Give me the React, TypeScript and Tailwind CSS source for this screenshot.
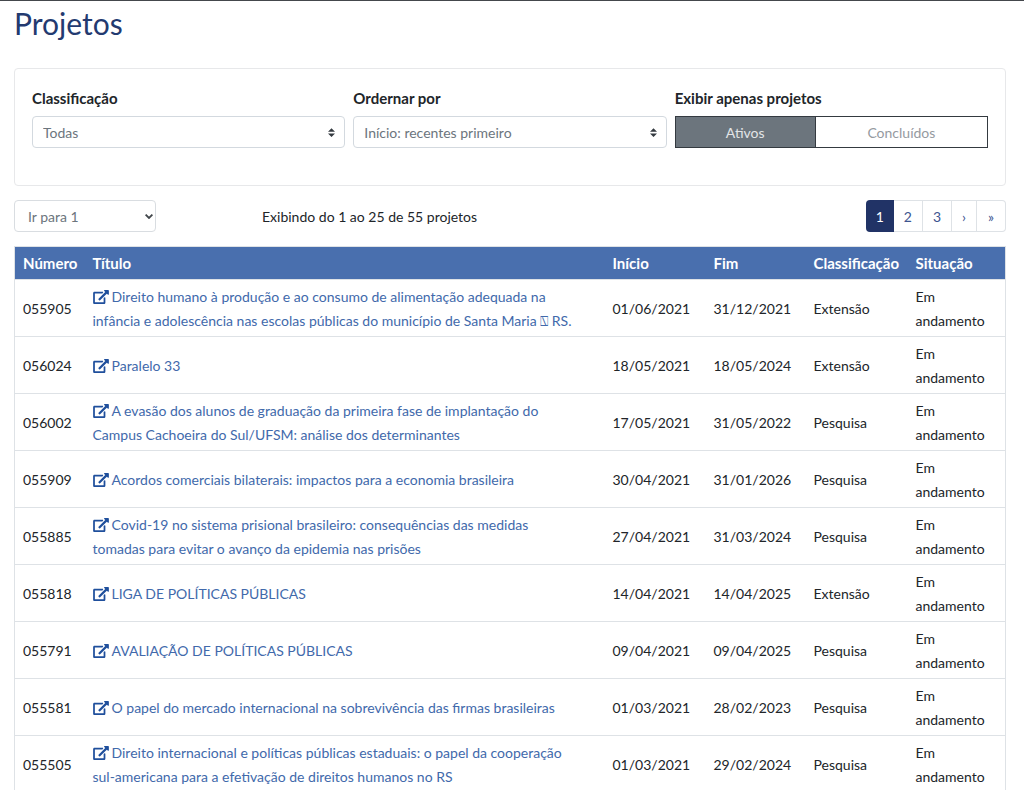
import type { ReactNode } from 'react';

type Project = {
  id: string;
  title: string;
  start: string;
  end: string;
  kind: string;
};

const projects: Project[] = [
  { id: '055905', title: 'Direito humano à produção e ao consumo de alimentação adequada na infância e adolescência nas escolas públicas do município de Santa Maria ⍂ RS.', start: '01/06/2021', end: '31/12/2021', kind: 'Extensão' },
  { id: '056024', title: 'Paralelo 33', start: '18/05/2021', end: '18/05/2024', kind: 'Extensão' },
  { id: '056002', title: 'A evasão dos alunos de graduação da primeira fase de implantação do Campus Cachoeira do Sul/UFSM: análise dos determinantes', start: '17/05/2021', end: '31/05/2022', kind: 'Pesquisa' },
  { id: '055909', title: 'Acordos comerciais bilaterais: impactos para a economia brasileira', start: '30/04/2021', end: '31/01/2026', kind: 'Pesquisa' },
  { id: '055885', title: 'Covid-19 no sistema prisional brasileiro: consequências das medidas tomadas para evitar o avanço da epidemia nas prisões', start: '27/04/2021', end: '31/03/2024', kind: 'Pesquisa' },
  { id: '055818', title: 'LIGA DE POLÍTICAS PÚBLICAS', start: '14/04/2021', end: '14/04/2025', kind: 'Extensão' },
  { id: '055791', title: 'AVALIAÇÃO DE POLÍTICAS PÚBLICAS', start: '09/04/2021', end: '09/04/2025', kind: 'Pesquisa' },
  { id: '055581', title: 'O papel do mercado internacional na sobrevivência das firmas brasileiras', start: '01/03/2021', end: '28/02/2023', kind: 'Pesquisa' },
  { id: '055505', title: 'Direito internacional e políticas públicas estaduais: o papel da cooperação sul-americana para a efetivação de direitos humanos no RS', start: '01/03/2021', end: '29/02/2024', kind: 'Pesquisa' },
];

function ExternalLink() {
  return (
    <svg viewBox="0 0 576 512" className="mr-[3px] inline-block h-3.5 w-4 align-[-2px] text-[#1f4f9c]" fill="currentColor" aria-hidden="true">
      <path d="M576 24v127.984c0 21.461-25.96 31.98-40.971 16.971l-35.707-35.709-243.523 243.523c-9.373 9.373-24.568 9.373-33.941 0l-22.627-22.627c-9.373-9.373-9.373-24.569 0-33.941L442.756 76.676l-35.703-35.705C391.982 25.9 402.656 0 424.024 0H552c13.255 0 24 10.745 24 24zM407.029 270.794l-16 16A23.999 23.999 0 0 0 384 303.765V448H64V128h264a24.003 24.003 0 0 0 16.97-7.029l16-16C376.089 89.851 365.381 64 344 64H48C21.49 64 0 85.49 0 112v352c0 26.51 21.49 48 48 48h352c26.51 0 48-21.49 48-48V287.764c0-21.382-25.852-32.09-40.971-16.97z" />
    </svg>
  );
}

function FilterSelect({ id, label, options }: { id: string; label: string; options: string[] }) {
  return (
    <div className="min-w-0">
      <label htmlFor={id} className="block text-[15px] font-bold">{label}</label>
      <div className="relative mt-1.5">
        <select id={id} className="block h-8 w-full appearance-none rounded border border-[#d3d9df] bg-white pt-px pr-8 pl-2.5 text-[#6c757d]">
          {options.map((o) => <option key={o}>{o}</option>)}
        </select>
        <svg viewBox="0 0 4 5" className="pointer-events-none absolute top-3 right-2.5 h-[9px] w-[7px]" fill="#343a40" aria-hidden="true">
          <path d="M2 0L0 2h4zm0 5L0 3h4z" />
        </svg>
      </div>
    </div>
  );
}

function PageLink({ label, children }: { label?: string; children: ReactNode }) {
  return (
    <li className="group">
      <a href="#" aria-label={label} className="flex h-8 items-center border-y border-r border-[#dee2e6] px-2.5 pt-px text-[#3d5590] group-last:rounded-r group-last:px-[11px]">
        {children}
      </a>
    </li>
  );
}

export default function App() {
  return (
    <main className="border-t border-[#44474c] bg-white pr-[18px] pl-3.5 font-['Lato','DejaVu_Sans',sans-serif] text-sm leading-6 text-[#212529]">
      <h1 className="pt-1 text-[30px] leading-9 text-[#233a70]">Projetos</h1>

      <form className="mt-[27px] rounded border border-[#e7e8ea] px-[17px] pt-[17px] pb-[37px]">
        <div className="grid grid-cols-3 gap-2">
          <FilterSelect id="classificacao" label="Classificação" options={['Todas', 'Extensão', 'Pesquisa']} />
          <FilterSelect id="ordem" label="Ordernar por" options={['Início: recentes primeiro', 'Início: antigos primeiro']} />
          <div role="group" aria-labelledby="exibir">
            <div id="exibir" className="text-[15px] font-bold">Exibir apenas projetos</div>
            <div className="mt-1.5 flex h-8 border border-[#343a40]">
              <button type="button" aria-pressed="true" className="w-[45%] border-r border-[#343a40] bg-[#6c757d] pt-px text-[#e3e5e7]">Ativos</button>
              <button type="button" aria-pressed="false" className="flex-1 bg-white pt-px text-[#959a9f]">Concluídos</button>
            </div>
          </div>
        </div>
      </form>

      <div className="mt-3.5 grid grid-cols-4 items-center">
        <div className="relative w-[142px]">
          <select aria-label="Ir para a página" className="block h-8 w-full appearance-none rounded border border-[#d9dde1] bg-white pt-px pr-6 pl-[13px] text-[#6c757d]">
            <option>Ir para 1</option>
            <option>Ir para 2</option>
            <option>Ir para 3</option>
          </select>
          <svg viewBox="0 0 8 5" className="pointer-events-none absolute top-3.5 right-[3px] h-[5px] w-2" fill="none" stroke="#41464b" strokeWidth="1.8" aria-hidden="true">
            <path d="M.6 .6L4 4L7.4 .6" />
          </svg>
        </div>
        <p className="col-span-2 pt-0.5">Exibindo do 1 ao 25 de 55 projetos</p>
        <nav aria-label="Paginação" className="justify-self-end">
          <ul className="flex">
            <li>
              <a href="#" aria-current="page" className="flex h-8 items-center rounded-l bg-[#213366] px-2.5 pt-px text-white">1</a>
            </li>
            <PageLink>2</PageLink>
            <PageLink>3</PageLink>
            <PageLink label="Próxima">›</PageLink>
            <PageLink label="Última">»</PageLink>
          </ul>
        </nav>
      </div>

      <table className="mt-3.5 w-full table-fixed border-collapse border border-[#dee2e6] text-left">
        <colgroup>
          <col className="w-[70px]" />
          <col />
          <col className="w-[101px]" />
          <col className="w-[100px]" />
          <col className="w-[102px]" />
          <col className="w-[98px]" />
        </colgroup>
        <thead>
          <tr className="bg-[#496fae] text-[15px] text-white">
            {['Número', 'Título', 'Início', 'Fim', 'Classificação', 'Situação'].map((h) => (
              <th key={h} scope="col" className="px-2 py-1 font-bold">{h}</th>
            ))}
          </tr>
        </thead>
        <tbody>
          {projects.map((p) => (
            <tr key={p.id} className="border-t border-[#dee2e6]">
              <td className="px-2 pt-[5px] pb-[3px]">{p.id}</td>
              <td className="pt-[5px] pr-6 pb-[3px] pl-2">
                <a href="#" className="text-[#4169ab]"><ExternalLink />{p.title}</a>
              </td>
              <td className="px-2 pt-[5px] pb-[3px]">{p.start}</td>
              <td className="px-2 pt-[5px] pb-[3px]">{p.end}</td>
              <td className="px-2 pt-[5px] pb-[3px]">{p.kind}</td>
              <td className="px-2 pt-[5px] pb-[3px]">Em<br />andamento</td>
            </tr>
          ))}
        </tbody>
      </table>
    </main>
  );
}
